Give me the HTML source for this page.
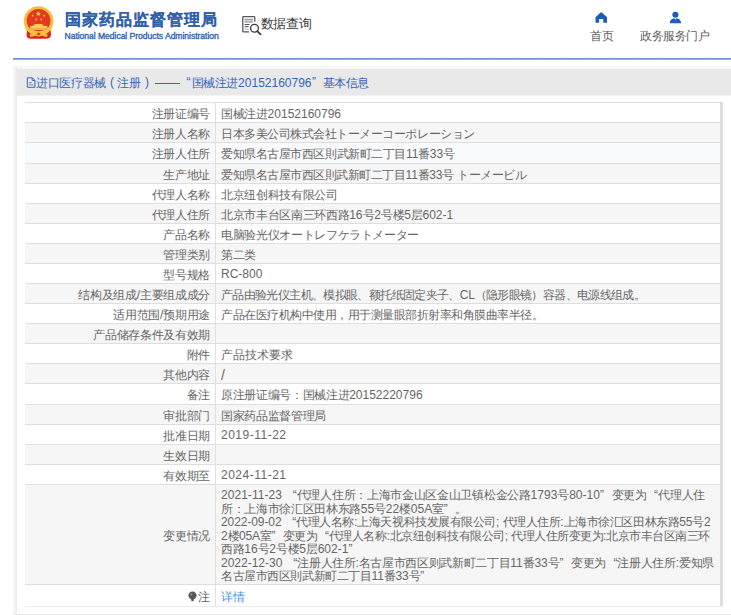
<!DOCTYPE html>
<html><head><meta charset="utf-8">
<style>
*{margin:0;padding:0;box-sizing:border-box}
html,body{width:731px;height:615px;overflow:hidden;background:#fff;font-family:"Liberation Sans",sans-serif}
.a{position:absolute;white-space:nowrap}
#title{left:65px;top:8.5px;font-size:16.2px;font-weight:bold;color:#3060aa;-webkit-text-stroke:0.1px #3060aa;letter-spacing:1px}
#sub{left:64.5px;top:30.5px;font-size:8.6px;color:#3563ab;-webkit-text-stroke:0.35px #3563ab;letter-spacing:-0.05px}
#dq{left:260.5px;top:15px;font-size:13.2px;color:#38383c;letter-spacing:-0.1px}
.nav{font-size:11.5px;color:#5c5c5c;top:28.5px;letter-spacing:-0.45px}

#bl{left:13px;top:58px;width:718px;height:2px;background:linear-gradient(#6a96c9 0 50%,#8db3de 50% 100%)}
#dot{left:13px;top:61px;width:718px;height:1px;background:repeating-linear-gradient(90deg,#eef3fa 0 1px,#fff 1px 3px)}
#panel{left:13px;top:66px;width:730px;height:549px;border-left:4px solid #f0f0f0;border-top:3px solid #f8f8f8;border-bottom:1px solid #e8e8e8;background:#fff}
#pl{left:13px;top:66px;width:4px;height:548px;background:linear-gradient(90deg,#f8f8f8,#f3f3f3 50%,#eaeaea)}
#hd{left:17px;top:69px;width:714px;height:26px;background:#e9e9e9;box-shadow:0 1px 0 #f3f3f3}
i,b{font-style:normal;font-weight:normal}
.h{position:absolute;top:75px;font-size:12px;color:#3466b8;white-space:nowrap}
.ln{position:absolute;left:25px;width:698px;height:1px;background:#dedede}
.bg{position:absolute;left:25px;width:695px}
.t{position:absolute;font-size:12px;color:#666;white-space:nowrap}
.ql,.qr{display:inline-block;width:11.5px}
.ql{text-align:right}
.lb{right:521px}
.vl{left:221px}
</style></head><body>
<!-- emblem -->
<svg class="a" style="left:20px;top:4px" width="38" height="38" viewBox="0 0 38 38">
  <path d="M7 24 L30.5 24 L31 31.5 Q30 34.8 26 34.8 L11 34.8 Q7 34.8 6.5 31.5 Z" fill="#d8281c"/>
  <circle cx="18.6" cy="17" r="14.8" fill="#f1bf3c"/>
  <circle cx="18.6" cy="16.8" r="11.9" fill="#e33a20"/>
  <path d="M5.5 21 Q18.6 33.5 31.7 21 L31.6 25.5 Q18.6 36 5.6 25.5Z" fill="#f2c444"/>
  <path d="M14.3 19.9h8.2v1.6h-8.2zM12.5 21.5h11.8v.6H12.5zM10.2 22h17.2v2.8H10.2z" fill="#f7d257"/>
  <path d="M8.5 24.8h20v1.2h-20z" fill="#efb834"/>
  <path d="M18.4 7.2l.75 1.6 1.75.2-1.3 1.2.4 1.75-1.6-.9-1.6.9.4-1.75-1.3-1.2 1.75-.2z" fill="#f6d04e"/>
  <circle cx="12.6" cy="11.7" r=".85" fill="#f6d04e"/>
  <circle cx="24.1" cy="11.7" r=".85" fill="#f6d04e"/>
  <circle cx="16.3" cy="15.4" r=".85" fill="#f6d04e"/>
  <circle cx="21.3" cy="15.4" r=".85" fill="#f6d04e"/>
  <path d="M9.5 30.5 Q18.6 27.5 27.7 30.5 L27 33 Q18.6 30.6 10.2 33Z" fill="#f1bf3c"/>
  <circle cx="18.6" cy="30" r="2.6" fill="#e9ad2e"/>
  <circle cx="18.6" cy="30" r="1.2" fill="#d8281c"/>
</svg>
<div id="title" class="a">国家药品监督管理局</div>
<div id="sub" class="a">National Medical Products Administration</div>
<!-- data query icon -->
<svg class="a" style="left:240px;top:14px" width="24" height="23" viewBox="0 0 24 23">
  <path d="M9 17.9H3.6Q2.8 17.9 2.8 17.1V3Q2.8 2.6 3.6 2.6H14.1Q14.8 2.6 14.8 3.4V7.8" fill="none" stroke="#58585c" stroke-width="1.3"/>
  <rect x="4.6" y="4.6" width="8.4" height="4" fill="#d0d0d3"/>
  <path d="M4.6 5.4h8.4M4.6 7.9h8.4" stroke="#8a8a8e" stroke-width=".8"/>
  <path d="M4.6 10.5h5M4.6 12.6h4" stroke="#555" stroke-width="1"/>
  <rect x="4.6" y="13.3" width="4" height="3.2" fill="#d8d8da"/>
  <circle cx="14.5" cy="14.3" r="3.9" fill="#fff" stroke="#38383c" stroke-width="1.3"/>
  <path d="M17.3 17.2l3.2 3.2" stroke="#38383c" stroke-width="1.7" stroke-linecap="round"/>
</svg>
<div id="dq" class="a">数据查询</div>
<!-- home -->
<svg class="a" style="left:595px;top:12px" width="13" height="12" viewBox="0 0 13 12">
  <path d="M0.5 5.3 L5.6 0.6 Q6.25 0 6.9 0.6 L12 5.3 V10.7 H8.2 V7 H4.1 V10.7 H0.5Z" fill="#1c5cb8"/>
</svg>
<div class="a nav" style="left:590px">首页</div>
<svg class="a" style="left:668.5px;top:11px" width="14" height="14" viewBox="0 0 14 14">
  <circle cx="6.4" cy="3.75" r="3.05" fill="#1c5cb8"/>
  <path d="M0.7 12.3 Q1 7.8 5.5 7.3 L6.4 8.7 L7.3 7.3 Q11.8 7.8 12.1 12.3Z" fill="#1c5cb8"/>
</svg>
<div class="a nav" style="left:640px">政务服务门户</div>

<div id="bl" class="a"></div>
<div id="dot" class="a"></div>
<div id="panel" class="a"></div>
<div id="pl" class="a"></div>
<div id="hd" class="a"></div>
<svg class="a" style="left:26px;top:77px" width="10" height="11" viewBox="0 0 10 11"><path d="M1.3 .8h5l2.6 2.6v6.9H1.3z" fill="none" stroke="#3466b8" stroke-width="1" stroke-linejoin="round"/><path d="M6.2 .8v2.7h2.7" fill="none" stroke="#3466b8" stroke-width=".9"/><path d="M2.8 5.6h3M2.8 7.8h4.6" stroke="#3466b8" stroke-width=".9" opacity=".8"/></svg>
<div class="h" style="left:36px"><i style="letter-spacing:-0.35px">进口医疗器械</i></div>
<div class="h" style="left:110px">(</div>
<div class="h" style="left:117px"><i style="letter-spacing:-0.35px">注册</i></div>
<div class="h" style="left:145px">)</div>
<div class="a" style="left:154.5px;top:83px;width:25px;height:1px;background:#3466b8"></div>
<div class="h" style="left:186.5px">“</div>
<div class="h" style="left:191.5px"><i style="letter-spacing:-0.350px">国械注进</i>20152160796</div>
<div class="h" style="left:312px">”</div>
<div class="h" style="left:322.5px"><i style="letter-spacing:-0.35px">基本信息</i></div>
<div class="bg" style="top:123px;height:19px;background:#f6f6f6"></div>
<div class="bg" style="top:143px;height:20px;background:#f9fafc"></div>
<div class="bg" style="top:164px;height:19px;background:#f6f6f6"></div>
<div class="bg" style="top:204px;height:19px;background:#f6f6f6"></div>
<div class="bg" style="top:244px;height:19px;background:#f6f6f6"></div>
<div class="bg" style="top:284px;height:19px;background:#f6f6f6"></div>
<div class="bg" style="top:324px;height:19px;background:#f6f6f6"></div>
<div class="bg" style="top:364px;height:19px;background:#f6f6f6"></div>
<div class="bg" style="top:405px;height:19px;background:#f6f6f6"></div>
<div class="bg" style="top:445px;height:19px;background:#f6f6f6"></div>
<div class="bg" style="top:485px;height:99px;background:#f6f6f6"></div>
<div class="ln" style="top:102px"></div>
<div class="ln" style="top:122px"></div>
<div class="ln" style="top:142px"></div>
<div class="ln" style="top:163px"></div>
<div class="ln" style="top:183px"></div>
<div class="ln" style="top:203px"></div>
<div class="ln" style="top:223px"></div>
<div class="ln" style="top:243px"></div>
<div class="ln" style="top:263px"></div>
<div class="ln" style="top:283px"></div>
<div class="ln" style="top:303px"></div>
<div class="ln" style="top:323px"></div>
<div class="ln" style="top:343px"></div>
<div class="ln" style="top:363px"></div>
<div class="ln" style="top:383px"></div>
<div class="ln" style="top:404px"></div>
<div class="ln" style="top:424px"></div>
<div class="ln" style="top:444px"></div>
<div class="ln" style="top:464px"></div>
<div class="ln" style="top:484px"></div>
<div class="ln" style="top:584px"></div>
<div class="ln" style="top:606px;background:#ececec"></div>
<div class="a" style="left:215px;top:102px;width:1px;height:504px;background:#e0e0e0"></div>
<div class="a" style="left:720px;top:102px;width:3px;height:504px;background:#dedede"></div>
<div class="t lb" id="l1" style="top:106.0px;"><i style="letter-spacing:-0.350px">注册证编号</i></div>
<div class="t vl" id="v1" style="top:106.0px;"><i style="letter-spacing:-0.350px">国械注进</i>20152160796</div>
<div class="t lb" id="l2" style="top:126.0px;"><i style="letter-spacing:-0.350px">注册人名称</i></div>
<div class="t vl" id="v2" style="top:126.0px;letter-spacing:-0.120px;"><i style="letter-spacing:-0.470px">日本多美公司株式会社トーメーコーポレーション</i></div>
<div class="t lb" id="l3" style="top:146.0px;"><i style="letter-spacing:-0.350px">注册人住所</i></div>
<div class="t vl" id="v3" style="top:146.0px;letter-spacing:-0.090px;"><i style="letter-spacing:-0.440px">爱知県名古屋市西区則武新町二丁目</i>11<i style="letter-spacing:-0.440px">番</i>33<i style="letter-spacing:-0.440px">号</i></div>
<div class="t lb" id="l4" style="top:167.0px;"><i style="letter-spacing:-0.350px">生产地址</i></div>
<div class="t vl" id="v4" style="top:167.0px;letter-spacing:-0.120px;"><i style="letter-spacing:-0.470px">爱知県名古屋市西区則武新町二丁目</i>11<i style="letter-spacing:-0.470px">番</i>33<i style="letter-spacing:-0.470px">号</i> <i style="letter-spacing:-0.470px">トーメービル</i></div>
<div class="t lb" id="l5" style="top:187.0px;"><i style="letter-spacing:-0.350px">代理人名称</i></div>
<div class="t vl" id="v5" style="top:187.0px;"><i style="letter-spacing:-0.350px">北京纽创科技有限公司</i></div>
<div class="t lb" id="l6" style="top:207.0px;"><i style="letter-spacing:-0.350px">代理人住所</i></div>
<div class="t vl" id="v6" style="top:207.0px;"><i style="letter-spacing:-0.350px">北京市丰台区南三环西路</i>16<i style="letter-spacing:-0.350px">号</i>2<i style="letter-spacing:-0.350px">号楼</i>5<i style="letter-spacing:-0.350px">层</i>602-1</div>
<div class="t lb" id="l7" style="top:227.0px;"><i style="letter-spacing:-0.350px">产品名称</i></div>
<div class="t vl" id="v7" style="top:227.0px;"><i style="letter-spacing:-0.350px">电脑验光仪オートレフケラトメーター</i></div>
<div class="t lb" id="l8" style="top:247.0px;"><i style="letter-spacing:-0.350px">管理类别</i></div>
<div class="t vl" id="v8" style="top:247.0px;"><i style="letter-spacing:-0.350px">第二类</i></div>
<div class="t lb" id="l9" style="top:267.0px;"><i style="letter-spacing:-0.350px">型号规格</i></div>
<div class="t vl" id="v9" style="top:267.0px;">RC-800</div>
<div class="t lb" id="l10" style="top:287.0px;"><i style="letter-spacing:-0.350px">结构及组成</i>/<i style="letter-spacing:-0.350px">主要组成成分</i></div>
<div class="t vl" id="v10" style="top:287.0px;letter-spacing:-0.280px;"><i style="letter-spacing:-0.630px">产品由验光仪主机、模拟眼、额托纸固定夹子、</i>CL<i style="letter-spacing:-0.630px">（隐形眼镜）容器、电源线组成。</i></div>
<div class="t lb" id="l11" style="top:307.0px;"><i style="letter-spacing:-0.350px">适用范围</i>/<i style="letter-spacing:-0.350px">预期用途</i></div>
<div class="t vl" id="v11" style="top:307.0px;letter-spacing:-0.150px;"><i style="letter-spacing:-0.500px">产品在医疗机构中使用，用于测量眼部折射率和角膜曲率半径。</i></div>
<div class="t lb" id="l12" style="top:327.0px;"><i style="letter-spacing:-0.350px">产品储存条件及有效期</i></div>
<div class="t lb" id="l13" style="top:347.0px;"><i style="letter-spacing:-0.350px">附件</i></div>
<div class="t vl" id="v13" style="top:347.0px;letter-spacing:0.280px;"><i style="letter-spacing:-0.070px">产品技术要求</i></div>
<div class="t lb" id="l14" style="top:367.0px;"><i style="letter-spacing:-0.350px">其他内容</i></div>
<div class="t vl" id="v14" style="top:367.0px;"><span style="font-size:14px">/</span></div>
<div class="t lb" id="l15" style="top:387.0px;"><i style="letter-spacing:-0.350px">备注</i></div>
<div class="t vl" id="v15" style="top:387.0px;"><i style="letter-spacing:-0.350px">原注册证编号：国械注进</i>20152220796</div>
<div class="t lb" id="l16" style="top:408.0px;"><i style="letter-spacing:-0.350px">审批部门</i></div>
<div class="t vl" id="v16" style="top:408.0px;"><i style="letter-spacing:-0.350px">国家药品监督管理局</i></div>
<div class="t lb" id="l17" style="top:428.0px;"><i style="letter-spacing:-0.350px">批准日期</i></div>
<div class="t vl" id="v17" style="top:428.0px;letter-spacing:0.500px;">2019-11-22</div>
<div class="t lb" id="l18" style="top:448.0px;"><i style="letter-spacing:-0.350px">生效日期</i></div>
<div class="t lb" id="l19" style="top:468.0px;"><i style="letter-spacing:-0.350px">有效期至</i></div>
<div class="t vl" id="v19" style="top:468.0px;letter-spacing:0.500px;">2024-11-21</div>
<div class="t lb" id="l20" style="top:528.0px;"><i style="letter-spacing:-0.350px">变更情况</i></div>
<div class="t vl" id="b1" style="top:487.2px;letter-spacing:0.040px;">2021-11-23 <b class="ql">“</b><i style="letter-spacing:-0.310px">代理人住所：上海市金山区金山卫镇松金公路</i>1793<i style="letter-spacing:-0.310px">号</i>80-10<b class="qr">”</b><i style="letter-spacing:-0.310px">变更为</i><b class="ql">“</b><i style="letter-spacing:-0.310px">代理人住</i></div>
<div class="t vl" id="b2" style="top:500.7px;"><i style="letter-spacing:-0.350px">所：上海市徐汇区田林东路</i>55<i style="letter-spacing:-0.350px">号</i>22<i style="letter-spacing:-0.350px">楼</i>05A<i style="letter-spacing:-0.350px">室</i><b class="qr">”</b><i style="letter-spacing:-0.350px">。</i></div>
<div class="t vl" id="b3" style="top:514.2px;letter-spacing:-0.090px;">2022-09-02 <b class="ql">“</b><i style="letter-spacing:-0.440px">代理人名称</i>:<i style="letter-spacing:-0.440px">上海天视科技发展有限公司</i>; <i style="letter-spacing:-0.440px">代理人住所</i>:<i style="letter-spacing:-0.440px">上海市徐汇区田林东路</i>55<i style="letter-spacing:-0.440px">号</i>2</div>
<div class="t vl" id="b4" style="top:527.7px;letter-spacing:-0.150px;">2<i style="letter-spacing:-0.500px">楼</i>05A<i style="letter-spacing:-0.500px">室</i><b class="qr">”</b><i style="letter-spacing:-0.500px">变更为</i><b class="ql">“</b><i style="letter-spacing:-0.500px">代理人名称</i>:<i style="letter-spacing:-0.500px">北京纽创科技有限公司</i>; <i style="letter-spacing:-0.500px">代理人住所变更为</i>:<i style="letter-spacing:-0.500px">北京市丰台区南三环</i></div>
<div class="t vl" id="b5" style="top:541.2px;"><i style="letter-spacing:-0.350px">西路</i>16<i style="letter-spacing:-0.350px">号</i>2<i style="letter-spacing:-0.350px">号楼</i>5<i style="letter-spacing:-0.350px">层</i>602-1<b class="qr">”</b></div>
<div class="t vl" id="b6" style="top:554.7px;">2022-12-30 <b class="ql">“</b><i style="letter-spacing:-0.350px">注册人住所</i>:<i style="letter-spacing:-0.350px">名古屋市西区则武新町二丁目</i>11<i style="letter-spacing:-0.350px">番</i>33<i style="letter-spacing:-0.350px">号</i><b class="qr">”</b><i style="letter-spacing:-0.350px">变更为</i><b class="ql">“</b><i style="letter-spacing:-0.350px">注册人住所</i>:<i style="letter-spacing:-0.350px">爱知県</i></div>
<div class="t vl" id="b7" style="top:568.2px;letter-spacing:-0.070px;"><i style="letter-spacing:-0.420px">名古屋市西区則武新町二丁目</i>11<i style="letter-spacing:-0.420px">番</i>33<i style="letter-spacing:-0.420px">号</i><b class="qr">”</b></div>
<div class="t lb" style="top:589px"><svg width="9" height="11" viewBox="0 0 9 11" style="vertical-align:-1px;margin-right:1.5px"><path d="M4.5 .4C2.1 .4 .4 2.1 .4 4.4 .4 6.3 1.8 7.5 3.1 8.3L3.5 10.3H5.5L5.9 8.3C7.2 7.5 8.6 6.3 8.6 4.4 8.6 2.1 6.9 .4 4.5 .4Z" fill="#58585c"/><circle cx="3.3" cy="3.3" r="1.1" fill="#fff" opacity=".35"/></svg><i style="letter-spacing:-0.350px">注</i></div>
<div class="t vl" style="top:589px;color:#4a90e2"><i style="letter-spacing:-0.350px">详情</i></div>
</body></html>
